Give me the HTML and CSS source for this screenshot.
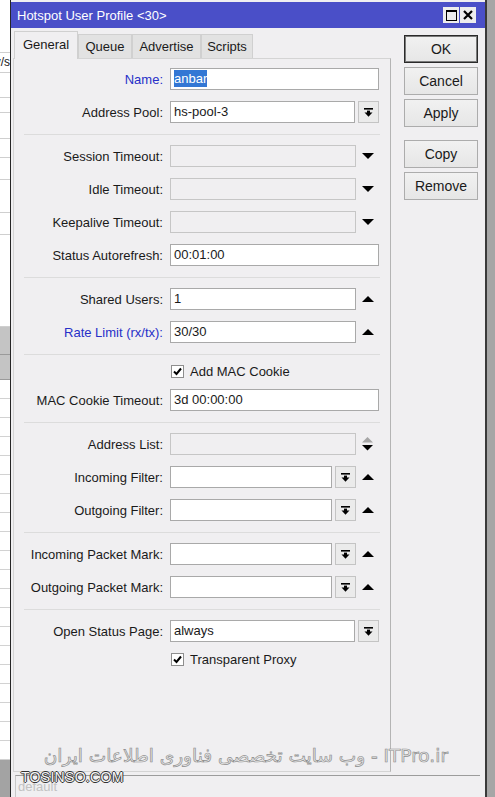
FILE: index.html
```html
<!DOCTYPE html>
<html lang="en">
<head>
    <meta charset="UTF-8">
    <meta name="viewport" content="width=device-width, initial-scale=1.0">
    <title>Hotspot User Profile</title>
    <link rel="stylesheet" href="styles.css">
</head>
<body>
    <div class="screen">
        <!-- list window behind the dialog -->
        <div class="behind-list">
            <div class="bl-row" style="height: 53px"></div>
            <div class="bl-row bl-text" style="height: 20px">v/s</div>
            <div class="bl-row" style="height: 25px"></div>
            <div class="bl-row" style="height: 15px"></div>
            <div class="bl-row" style="height: 26px"></div>
            <div class="bl-row" style="height: 19px"></div>
            <div class="bl-row" style="height: 22px"></div>
            <div class="bl-row" style="height: 33px"></div>
            <div class="bl-row" style="height: 22px"></div>
            <div class="bl-row" style="height: 92px"></div>
            <div class="bl-row bl-grey" style="height: 28px"></div>
            <div class="bl-row bl-grey" style="height: 25px"></div>
            <div class="bl-lines"></div>
        </div>

        <div class="window">
            <div class="titlebar">
                <span class="title">Hotspot User Profile &lt;30&gt;</span>
                <div class="win-btns">
                    <span class="win-btn"><span class="max-box"></span></span>
                    <span class="win-btn">
                        <svg width="10" height="10" viewBox="0 0 10 10"><path d="M1 1 L9 9 M9 1 L1 9" stroke="#000" stroke-width="2.2"/></svg>
                    </span>
                </div>
            </div>

            <div class="win-body">
                <div class="tabs-col">
                    <div class="tabs">
                        <div class="tab active" style="width: 64px">General</div>
                        <div class="tab" style="width: 54px">Queue</div>
                        <div class="tab" style="width: 69px">Advertise</div>
                        <div class="tab" style="width: 52px">Scripts</div>
                    </div>

                    <div class="panel">
                        <div class="row">
                            <label class="lbl blue">Name:</label>
                            <div class="field"><div class="input"><span class="selected">anbar</span></div></div>
                        </div>
                        <div class="row">
                            <label class="lbl">Address Pool:</label>
                            <div class="field">
                                <div class="input">hs-pool-3</div>
                                <span class="pick-btn"><svg width="9" height="9" viewBox="0 0 9 9"><rect x="0" y="0" width="9" height="1.6" fill="#000"/><rect x="3" y="2.6" width="3" height="2.4" fill="#000"/><polygon points="0.5,4.6 8.5,4.6 4.5,8.8" fill="#000"/></svg></span>
                            </div>
                        </div>

                        <div class="sep"></div>

                        <div class="row">
                            <label class="lbl">Session Timeout:</label>
                            <div class="field">
                                <div class="input disabled"></div>
                                <span class="arrow-slot"><svg width="12" height="6" viewBox="0 0 12 6"><polygon points="0,0 12,0 6,6" fill="#000"/></svg></span>
                            </div>
                        </div>
                        <div class="row">
                            <label class="lbl">Idle Timeout:</label>
                            <div class="field">
                                <div class="input disabled"></div>
                                <span class="arrow-slot"><svg width="12" height="6" viewBox="0 0 12 6"><polygon points="0,0 12,0 6,6" fill="#000"/></svg></span>
                            </div>
                        </div>
                        <div class="row">
                            <label class="lbl">Keepalive Timeout:</label>
                            <div class="field">
                                <div class="input disabled"></div>
                                <span class="arrow-slot"><svg width="12" height="6" viewBox="0 0 12 6"><polygon points="0,0 12,0 6,6" fill="#000"/></svg></span>
                            </div>
                        </div>
                        <div class="row">
                            <label class="lbl">Status Autorefresh:</label>
                            <div class="field"><div class="input">00:01:00</div></div>
                        </div>

                        <div class="sep"></div>

                        <div class="row">
                            <label class="lbl">Shared Users:</label>
                            <div class="field">
                                <div class="input">1</div>
                                <span class="arrow-slot"><svg width="12" height="6" viewBox="0 0 12 6"><polygon points="0,6 12,6 6,0" fill="#000"/></svg></span>
                            </div>
                        </div>
                        <div class="row">
                            <label class="lbl blue">Rate Limit (rx/tx):</label>
                            <div class="field">
                                <div class="input">30/30</div>
                                <span class="arrow-slot"><svg width="12" height="6" viewBox="0 0 12 6"><polygon points="0,6 12,6 6,0" fill="#000"/></svg></span>
                            </div>
                        </div>

                        <div class="sep"></div>

                        <div class="check-row">
                            <span class="checkbox"><svg width="11" height="11" viewBox="0 0 11 11"><path d="M2 5.5 L4.5 8 L9 2.5" fill="none" stroke="#000" stroke-width="2"/></svg></span>
                            <span>Add MAC Cookie</span>
                        </div>
                        <div class="row">
                            <label class="lbl">MAC Cookie Timeout:</label>
                            <div class="field"><div class="input">3d 00:00:00</div></div>
                        </div>

                        <div class="sep"></div>

                        <div class="row">
                            <label class="lbl">Address List:</label>
                            <div class="field">
                                <div class="input disabled"></div>
                                <span class="arrow-slot"><svg width="11" height="14" viewBox="0 0 11 14"><polygon points="0,5.5 11,5.5 5.5,0" fill="#a6a6a6"/><polygon points="0,8 11,8 5.5,13.5" fill="#000"/></svg></span>
                            </div>
                        </div>
                        <div class="row">
                            <label class="lbl">Incoming Filter:</label>
                            <div class="field">
                                <div class="input"></div>
                                <span class="pick-btn"><svg width="9" height="9" viewBox="0 0 9 9"><rect x="0" y="0" width="9" height="1.6" fill="#000"/><rect x="3" y="2.6" width="3" height="2.4" fill="#000"/><polygon points="0.5,4.6 8.5,4.6 4.5,8.8" fill="#000"/></svg></span>
                                <span class="arrow-slot"><svg width="12" height="6" viewBox="0 0 12 6"><polygon points="0,6 12,6 6,0" fill="#000"/></svg></span>
                            </div>
                        </div>
                        <div class="row">
                            <label class="lbl">Outgoing Filter:</label>
                            <div class="field">
                                <div class="input"></div>
                                <span class="pick-btn"><svg width="9" height="9" viewBox="0 0 9 9"><rect x="0" y="0" width="9" height="1.6" fill="#000"/><rect x="3" y="2.6" width="3" height="2.4" fill="#000"/><polygon points="0.5,4.6 8.5,4.6 4.5,8.8" fill="#000"/></svg></span>
                                <span class="arrow-slot"><svg width="12" height="6" viewBox="0 0 12 6"><polygon points="0,6 12,6 6,0" fill="#000"/></svg></span>
                            </div>
                        </div>

                        <div class="sep"></div>

                        <div class="row">
                            <label class="lbl">Incoming Packet Mark:</label>
                            <div class="field">
                                <div class="input"></div>
                                <span class="pick-btn"><svg width="9" height="9" viewBox="0 0 9 9"><rect x="0" y="0" width="9" height="1.6" fill="#000"/><rect x="3" y="2.6" width="3" height="2.4" fill="#000"/><polygon points="0.5,4.6 8.5,4.6 4.5,8.8" fill="#000"/></svg></span>
                                <span class="arrow-slot"><svg width="12" height="6" viewBox="0 0 12 6"><polygon points="0,6 12,6 6,0" fill="#000"/></svg></span>
                            </div>
                        </div>
                        <div class="row">
                            <label class="lbl">Outgoing Packet Mark:</label>
                            <div class="field">
                                <div class="input"></div>
                                <span class="pick-btn"><svg width="9" height="9" viewBox="0 0 9 9"><rect x="0" y="0" width="9" height="1.6" fill="#000"/><rect x="3" y="2.6" width="3" height="2.4" fill="#000"/><polygon points="0.5,4.6 8.5,4.6 4.5,8.8" fill="#000"/></svg></span>
                                <span class="arrow-slot"><svg width="12" height="6" viewBox="0 0 12 6"><polygon points="0,6 12,6 6,0" fill="#000"/></svg></span>
                            </div>
                        </div>

                        <div class="sep"></div>

                        <div class="row">
                            <label class="lbl">Open Status Page:</label>
                            <div class="field">
                                <div class="input">always</div>
                                <span class="pick-btn"><svg width="9" height="9" viewBox="0 0 9 9"><rect x="0" y="0" width="9" height="1.6" fill="#000"/><rect x="3" y="2.6" width="3" height="2.4" fill="#000"/><polygon points="0.5,4.6 8.5,4.6 4.5,8.8" fill="#000"/></svg></span>
                            </div>
                        </div>
                        <div class="check-row">
                            <span class="checkbox"><svg width="11" height="11" viewBox="0 0 11 11"><path d="M2 5.5 L4.5 8 L9 2.5" fill="none" stroke="#000" stroke-width="2"/></svg></span>
                            <span>Transparent Proxy</span>
                        </div>
                    </div>
                </div>

                <div class="actions">
                    <div class="btn default">OK</div>
                    <div class="btn">Cancel</div>
                    <div class="btn">Apply</div>
                    <div class="btn spaced">Copy</div>
                    <div class="btn">Remove</div>
                </div>
            </div>

            <div class="statusbar">
                <div class="status-cell">default</div>
            </div>
        </div>

        <div class="behind-right"></div>

        <div class="watermark">ITPro.ir - وب سایت تخصصی فناوری اطلاعات ایران</div>
        <div class="watermark-site">TOSINSO.COM</div>
    </div>
</body>
</html>
```

FILE: styles.css
```css
body {
    margin: 0;
    font-family: "Liberation Sans", Arial, sans-serif;
    font-size: 13px;
    color: #1a1a1a;
    background: #a3a3a3;
}
.screen {
    position: relative;
    width: 495px;
    height: 797px;
    display: flex;
    overflow: hidden;
}

/* list behind the dialog */
.behind-list {
    width: 10px;
    flex: none;
    background: #a3a3a3;
    display: flex;
    flex-direction: column;
}
.bl-row {
    flex: none;
    background: #fff;
    border-bottom: 1px solid #cfcfcf;
    box-sizing: border-box;
}
.bl-text {
    font-size: 12px;
    line-height: 18px;
    text-align: right;
    overflow: hidden;
    white-space: nowrap;
    direction: rtl;
}
.bl-grey {
    background: #c4c4c4;
    border-bottom-color: #9a9a9a;
}
.bl-lines {
    height: 380px;
    flex: none;
    background: repeating-linear-gradient(to bottom, #fff 0, #fff 18px, #d2d2d2 18px, #d2d2d2 19px);
}
.behind-right {
    width: 8px;
    flex: none;
    background: #a6a6a6;
}

/* dialog */
.window {
    width: 477px;
    flex: none;
    box-sizing: border-box;
    border-left: 1px solid #262626;
    border-right: 2px solid #3a3a3a;
    background: #f0eff1;
    display: flex;
    flex-direction: column;
}
.titlebar {
    margin-top: 2px;
    height: 26px;
    background: #4a4fc8;
    display: flex;
    align-items: center;
    justify-content: space-between;
    padding: 0 9px 0 6px;
}
.title {
    color: #fff;
    font-size: 13px;
}
.win-btns {
    display: flex;
    gap: 1px;
}
.win-btn {
    width: 16px;
    height: 16px;
    background: #ededed;
    display: flex;
    align-items: center;
    justify-content: center;
}
.max-box {
    width: 9px;
    height: 8px;
    border: 1px solid #000;
    border-top-width: 2px;
}

.win-body {
    display: flex;
    padding: 3px 7px 0 2px;
}
.tabs-col {
    width: 378px;
    flex: none;
}
.tabs {
    display: flex;
    align-items: flex-end;
    height: 27px;
    padding-left: 1px;
}
.tab {
    height: 24px;
    box-sizing: border-box;
    background: #e2e2e2;
    border: 1px solid #d0d0d0;
    border-bottom: none;
    text-align: center;
    line-height: 24px;
    color: #1a1a1a;
}
.tab.active {
    height: 28px;
    line-height: 26px;
    background: #f0eff1;
    margin-bottom: -1px;
    position: relative;
    z-index: 1;
}
.panel {
    height: 714px;
    box-sizing: border-box;
    border: 1px solid #d4d4d4;
    border-right-color: #b4b4b4;
    padding-top: 9px;
}

.row {
    display: flex;
    align-items: center;
    height: 22px;
    margin-bottom: 11px;
}
.lbl {
    width: 149px;
    flex: none;
    text-align: right;
    white-space: nowrap;
}
.lbl.blue {
    color: #2730c8;
}
.field {
    margin-left: 7px;
    width: 209px;
    display: flex;
    align-items: center;
}
.input {
    flex: 1;
    height: 22px;
    box-sizing: border-box;
    border: 1px solid #a9a9a9;
    background: #fff;
    padding: 0 3px;
    line-height: 20px;
    white-space: nowrap;
    overflow: hidden;
}
.input.disabled {
    background: #f0eff1;
    border-color: #c6c6c6;
}
.selected {
    background: #3377d4;
    color: #fff;
    padding: 1px 0;
}
.pick-btn {
    width: 21px;
    height: 22px;
    flex: none;
    box-sizing: border-box;
    margin-left: 3px;
    border: 1px solid #c4c4c4;
    background: #ebebeb;
    display: flex;
    align-items: center;
    justify-content: center;
}
.arrow-slot {
    width: 23px;
    height: 22px;
    flex: none;
    display: flex;
    align-items: center;
    justify-content: center;
}
.sep {
    height: 1px;
    background: #dcdcdc;
    margin: 0 10px 10px 10px;
}
.check-row {
    display: flex;
    align-items: center;
    gap: 6px;
    height: 16px;
    margin: -2px 0 10px 157px;
}
.checkbox {
    width: 13px;
    height: 13px;
    box-sizing: border-box;
    border: 1px solid #8e8e8e;
    background: #fff;
    display: flex;
    align-items: center;
    justify-content: center;
}

.actions {
    margin-left: 13px;
    width: 74px;
    padding-top: 4px;
    display: flex;
    flex-direction: column;
    gap: 4px;
}
.btn {
    height: 28px;
    box-sizing: border-box;
    border: 1px solid #acacac;
    background: linear-gradient(#f1f1f1, #e6e6e6);
    text-align: center;
    line-height: 26px;
    font-size: 14px;
    color: #1a1a1a;
}
.btn.default {
    border-color: #2a2a2a;
    box-shadow: inset 0 0 0 1px #7a7a7a;
}
.btn.spaced {
    margin-top: 9px;
}

.statusbar {
    margin: 3px 5px 0 4px;
    flex: 1;
    border-top: 1px solid #9c9c9c;
    border-left: 1px solid #c8c8c8;
}
.status-cell {
    padding: 3px 2px;
    color: #c2c2c2;
}

/* site marks over the picture */
.watermark {
    position: absolute;
    left: 48px;
    top: 745px;
    width: 400px;
    direction: rtl;
    text-align: left;
    font-family: "DejaVu Sans", sans-serif;
    font-size: 18.5px;
    white-space: nowrap;
    color: #ececec;
    -webkit-text-stroke: 0.7px #8e8e8e;
}
.watermark-site {
    position: absolute;
    left: 21px;
    top: 769px;
    font-size: 14px;
    letter-spacing: 0.3px;
    color: #f4f4f4;
    text-shadow: 1px 0 #333, -1px 0 #333, 0 1px #333, 0 -1px #333;
}
```
